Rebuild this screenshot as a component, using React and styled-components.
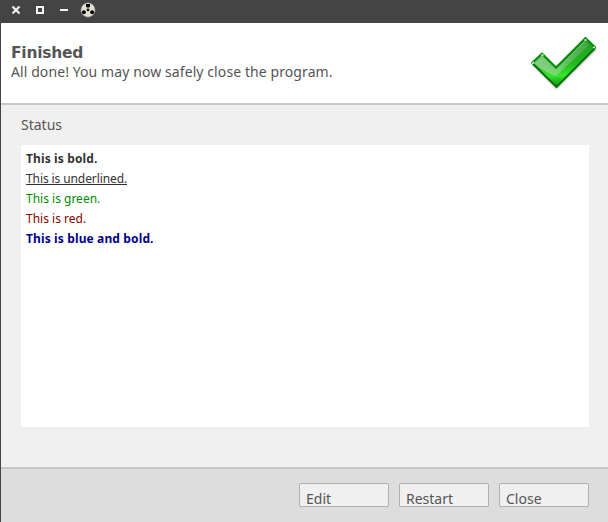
import React from "react";
import styled, { createGlobalStyle } from "styled-components";

const GlobalStyle = createGlobalStyle`
  * { box-sizing: border-box; }
  body { margin: 0; overflow: hidden; }
`;

const Window = styled.div`
  width: 608px;
  height: 522px;
  display: flex;
  flex-direction: column;
  border-left: 1px solid #444444;
  background: #f0f0f0;
  color: #555555;
  font: 14px/20px "Noto Sans", sans-serif;
`;

const TitleBar = styled.div`
  height: 23px;
  flex: none;
  display: flex;
  align-items: flex-start;
  background: #444444;
  svg { display: block; }
`;

const Header = styled.header`
  height: 82px;
  flex: none;
  display: flex;
  justify-content: space-between;
  background: #ffffff;
  border-bottom: 2px solid #c8c8c8;
`;

const Heading = styled.div`
  padding: 20px 0 0 10px;
`;

const Title = styled.h1`
  height: 19px;
  margin: 0;
  font: bold 15.5px/20px "DejaVu Sans", sans-serif;
  letter-spacing: -0.25px;
  color: #555555;
`;

const Subtitle = styled.p`
  margin: 0;
  white-space: nowrap;
  letter-spacing: 0.09px;
`;

const Tick = styled.svg`
  display: block;
  width: 72px;
  height: 60px;
  margin: 10px 8px 0 0;
`;

const Body = styled.main`
  flex: 1;
  display: flex;
  flex-direction: column;
  padding: 10px 19px 0 20px;
`;

const Log = styled.div`
  height: 282px;
  margin-top: 10px;
  padding: 4px 5px;
  background: #ffffff;
  font-size: 12px;
`;

const Line = styled.div`
  height: 20px;
  white-space: nowrap;
  color: ${(p) => p.$color || "#333333"};
  font-weight: ${(p) => (p.$bold ? 700 : 400)};
  letter-spacing: ${(p) => (p.$bold ? "0.13px" : p.$underline ? "-0.1px" : "normal")};
  text-decoration: ${(p) => (p.$underline ? "underline" : "none")};
`;

const Footer = styled.footer`
  height: 55px;
  flex: none;
  display: flex;
  justify-content: flex-end;
  gap: 10px;
  padding: 14px 19px 0 0;
  background: #dddddd;
  border-top: 2px solid #c6c6c6;
`;

const Button = styled.button`
  width: 90px;
  height: 24px;
  padding: 5px 0 0 6px;
  overflow: hidden;
  display: flex;
  border: 1px solid #b0b0b0;
  border-radius: 2px;
  background: #f0f0f0;
  color: #555555;
  font: 14px/20px "Noto Sans", sans-serif;
  text-align: left;
`;

export default function App() {
  return (
    <>
      <GlobalStyle />
      <Window>
        <TitleBar>
          <svg width="110" height="23" viewBox="1 0 110 23">
            <path d="M12.5 6.5l7 7M19.5 6.5l-7 7" stroke="#f4f4f4" strokeWidth="2.2" />
            <rect x="37" y="7" width="6" height="6" fill="none" stroke="#f4f4f4" strokeWidth="2" />
            <path d="M60 10h8" stroke="#f4f4f4" strokeWidth="2" />
            <circle cx="88" cy="10" r="7.2" fill="#e2e0d2" stroke="#77776c" strokeWidth=".6" />
            <path d="M86 4h4v3l-2 .7-2-.7z" fill="#080808" />
            <circle cx="83.9" cy="12.3" r="2" fill="#080808" />
            <circle cx="92.1" cy="12.3" r="2" fill="#080808" />
            <circle cx="88" cy="9.9" r="1.4" fill="#111111" />
          </svg>
        </TitleBar>
        <Header>
          <Heading>
            <Title>Finished</Title>
            <Subtitle>All done! You may now safely close the program.</Subtitle>
          </Heading>
          <Tick viewBox="528 33 72 60">
            <defs>
              <linearGradient id="tickFill" gradientUnits="userSpaceOnUse" x1="0" y1="38" x2="0" y2="88">
                <stop offset="0" stopColor="#249a24" />
                <stop offset=".5" stopColor="#22b81f" />
                <stop offset=".75" stopColor="#35e62c" />
                <stop offset="1" stopColor="#087d08" />
              </linearGradient>
              <linearGradient id="tickGloss" x1="0" y1="0" x2="1" y2="0">
                <stop offset="0" stopColor="#b7d3b5" stopOpacity=".7" />
                <stop offset=".45" stopColor="#a0d49d" stopOpacity=".6" />
                <stop offset="1" stopColor="#69a567" stopOpacity=".5" />
              </linearGradient>
              <filter id="tickShadow" x="-10%" y="-10%" width="120%" height="120%">
                <feGaussianBlur stdDeviation="1" />
              </filter>
            </defs>
            <path d="M533 64l23.5 24L596 49" fill="none" stroke="#555" strokeWidth="1.5" opacity=".5" filter="url(#tickShadow)" />
            <path d="M532 63L542 53.5l14 14 29.5-29.5 9.8 9.5L556.5 87z" fill="url(#tickFill)" stroke="#078a0b" strokeWidth="1.8" strokeLinejoin="round" />
            <path d="M534 63.5l8-7.5 14 14 29-29 4 4L556 76q-12-4-21-12z" fill="url(#tickGloss)" />
            <path d="M534.5 63l7.5-7 14 14 29-29" fill="none" stroke="#8fd28b" strokeWidth=".6" />
            <path d="M533 64l23.5 23L595 49" fill="none" stroke="#06510a" strokeWidth="1.3" opacity=".65" />
            <path d="M532.5 63.5l1-1M542 55h1M585 40h1M593.5 47.5h1" stroke="#e9ffe8" strokeWidth="1.4" strokeLinecap="round" />
          </Tick>
        </Header>
        <Body>
          <div>Status</div>
          <Log>
            <Line $bold>This is bold.</Line>
            <Line $underline>This is underlined.</Line>
            <Line $color="#008a00">This is green.</Line>
            <Line $color="#8b0000">This is red.</Line>
            <Line $color="#00008b" $bold>This is blue and bold.</Line>
          </Log>
        </Body>
        <Footer>
          <Button>Edit</Button>
          <Button>Restart</Button>
          <Button>Close</Button>
        </Footer>
      </Window>
    </>
  );
}
